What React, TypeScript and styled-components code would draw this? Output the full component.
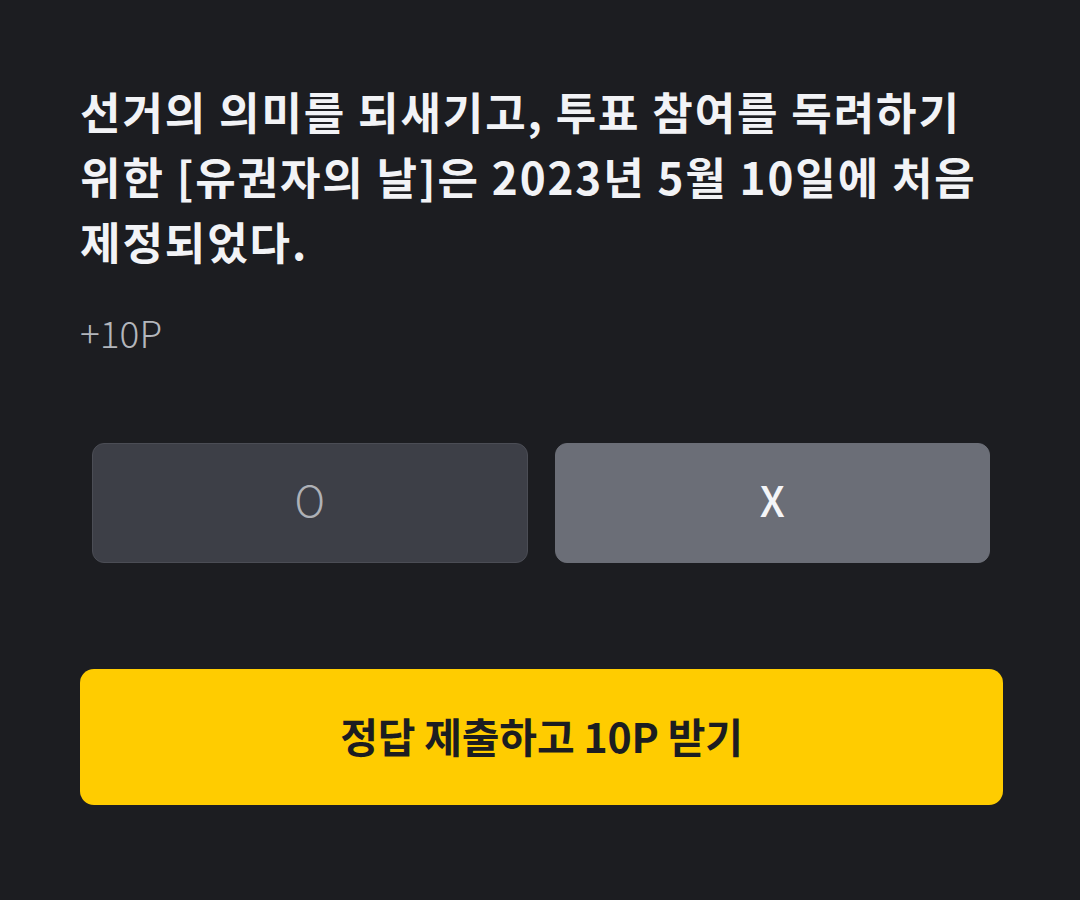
import React from "react";
import styled, { createGlobalStyle } from "styled-components";

const Global = createGlobalStyle`
  html, body { margin: 0; padding: 0; background: #1c1d21; }
  body { font-family: "Noto Sans CJK KR", "Noto Sans", sans-serif; }
  * { box-sizing: border-box; }
`;

const Page = styled.div`
  min-height: 900px;
  background: #1c1d21;
  padding: 79px 77px 0 80px;
  display: flex;
  flex-direction: column;
`;

const Question = styled.h1`
  margin: 0;
  color: #f2f3f6;
  font-size: 44px;
  font-weight: 700;
  line-height: 65px;
  letter-spacing: 1.9px;
`;

const Reward = styled.div`
  margin-top: 33px;
  color: #b3b6bc;
  font-size: 37px;
  font-weight: 300;
  line-height: 50px;
`;

const Choices = styled.div`
  margin-top: 86px;
  padding: 0 13px 0 12px;
  display: grid;
  grid-template-columns: 1fr 1fr;
  gap: 27px;
`;

const Choice = styled.button<{ $selected?: boolean }>`
  height: 120px;
  border-radius: 12px;
  border: 1px solid ${(p) => (p.$selected ? "#6b6e77" : "#4b4d55")};
  background: ${(p) => (p.$selected ? "#6b6e77" : "#3d3f47")};
  color: ${(p) => (p.$selected ? "#f4f5f8" : "#aeb1b7")};
  font-family: inherit;
  font-size: 42px;
  font-weight: ${(p) => (p.$selected ? 500 : 300)};
  display: flex;
  align-items: center;
  justify-content: center;
  padding: 0 0 9px;
  cursor: pointer;
`;

const Submit = styled.button`
  margin-top: 106px;
  height: 136px;
  border: none;
  border-radius: 14px;
  background: #ffcc00;
  color: #1c1d21;
  font-family: inherit;
  font-size: 41px;
  font-weight: 700;
  letter-spacing: -0.2px;
  display: flex;
  align-items: center;
  justify-content: center;
  padding: 0 0 4px;
  cursor: pointer;
`;

export default function App() {
  return (
    <>
      <Global />
      <Page>
        <Question>
          선거의 의미를 되새기고, 투표 참여를 독려하기
          <br />
          위한 [유권자의 날]은 2023년 5월 10일에 처음
          <br />
          제정되었다.
        </Question>
        <Reward>+10P</Reward>
        <Choices>
          <Choice>O</Choice>
          <Choice $selected>X</Choice>
        </Choices>
        <Submit>정답 제출하고 10P 받기</Submit>
      </Page>
    </>
  );
}
